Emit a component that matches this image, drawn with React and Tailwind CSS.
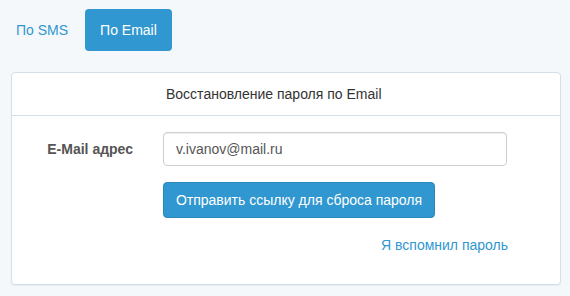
export default function App() {
	return (
		<div className="min-h-screen w-full bg-[#f5f8fa] font-['Liberation_Sans',Arial,sans-serif] text-[14px] leading-[22px] text-[#636b6f]">
			<div className="flex gap-[2px] pl-[1px] pt-[9px]">
				<a href="#" className="px-[15px] py-[10px] rounded-[4px] text-[#3097d1]">
					По SMS
				</a>
				<a href="#" className="px-[15px] py-[10px] rounded-[4px] bg-[#3097d1] text-white">
					По Email
				</a>
			</div>

			<div className="mt-[21px] ml-[11px] w-[550px] h-[213px] bg-white border border-[#d3e0e9] rounded-[4px] shadow-[0_1px_1px_rgba(0,0,0,0.05)]">
				<div className="h-[43px] border-b border-[#d3e0e9] pl-[154px] py-[10px] text-[#333]">
					Восстановление пароля по Email
				</div>

				<div className="pt-[16px]">
					<div className="flex items-center gap-[30px]">
						<label className="w-[121px] text-right font-bold text-[#555]">
							E-Mail адрес
						</label>
						<input
							type="email"
							defaultValue="v.ivanov@mail.ru"
							className="w-[344px] h-[34px] px-[12px] border border-[#ccd0d2] rounded-[4px] text-[#555] outline-none shadow-[inset_0_1px_1px_rgba(0,0,0,0.075)]"
						/>
					</div>

					<div className="mt-[16px] pl-[151px]">
						<button className="w-[272px] h-[36px] rounded-[4px] bg-[#3097d1] border border-[#2a88bd] text-white">
							Отправить ссылку для сброса пароля
						</button>
					</div>

					<div className="mt-[16px] flex justify-end pr-[52px]">
						<a href="#" className="text-[#3097d1]">
							Я вспомнил пароль
						</a>
					</div>
				</div>
			</div>
		</div>
	)
}
